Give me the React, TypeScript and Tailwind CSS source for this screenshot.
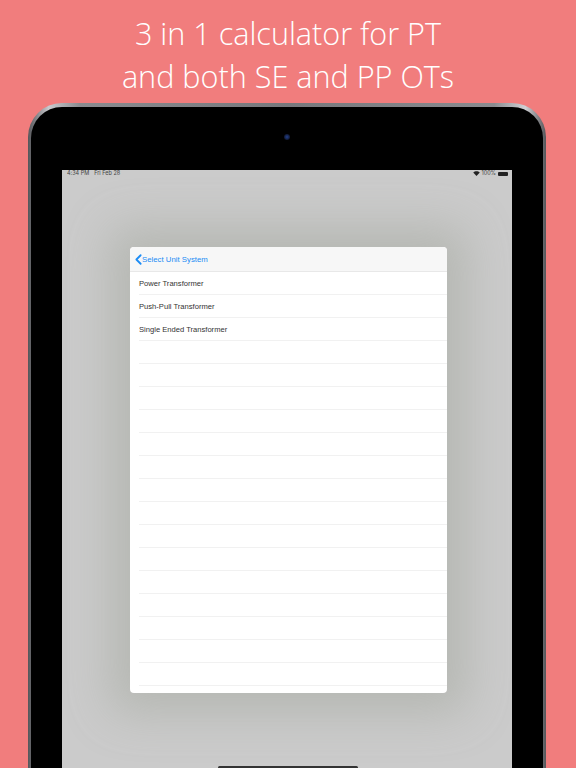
import React from "react";
import { ChevronLeft } from "lucide-react";

const rows = [
  "Power Transformer",
  "Push-Pull Transformer",
  "Single Ended Transformer",
  ...Array(15).fill(""),
];

function StatusBar() {
  return (
    <div className="h-[7px] flex items-center justify-between pl-[5px] pr-[4px] text-[5.5px] leading-[7px] text-[#444] font-['Inter',sans-serif]">
      <div className="flex gap-[5px]">
        <span>4:34 PM</span>
        <span>Fri Feb 28</span>
      </div>
      <div className="flex items-center gap-[2px]">
        <svg width="7" height="5" viewBox="0 0 14 10" fill="#222" className="-mr-[1px]">
          <path d="M7 10 L0.5 3.2 C4 -0.6 10 -0.6 13.5 3.2 Z" />
        </svg>
        <span>100%</span>
        <div className="w-[10px] h-[4px] bg-[#222] rounded-[1px]" />
      </div>
    </div>
  );
}

function UnitCard() {
  return (
    <div className="w-[317px] h-[446px] bg-white rounded-[4px] overflow-hidden shadow-[0_0_45px_20px_rgba(178,180,174,0.85)] font-['Liberation_Sans',sans-serif]">
      <div className="h-[25px] pt-[1px] bg-[#f7f7f7] border-b border-[#e8e8e8] flex items-center text-[#1b8cf5] text-[7.8px]">
        <ChevronLeft size={17} strokeWidth={2.5} className="-mr-[5px]" />
        <span>Select Unit System</span>
      </div>
      <div className="pl-[9px]">
        {rows.map((row, i) => (
          <div
            key={i}
            className="h-[23px] pt-[1px] border-b border-[#f1f1f1] flex items-center text-[7.6px] text-[#333]"
          >
            {row}
          </div>
        ))}
      </div>
    </div>
  );
}

export default function App() {
  return (
    <div className="w-[576px] h-[768px] overflow-hidden bg-[#f17d7d] flex flex-col">
      <div className="pt-[12px] h-[103px] shrink-0 text-center text-white text-[30.6px] leading-[43px] font-light font-['Open_Sans',sans-serif]">
        <div>3 in 1 calculator for PT</div>
        <div>and both SE and PP OTs</div>
      </div>
      <div className="ml-[28px] w-[518px] h-[700px] shrink-0 rounded-t-[34px] pt-[4px] px-[3px] bg-[linear-gradient(90deg,#55565a_0%,#c9c9cd_4%,#8a8b8f_10%,#77787c_50%,#8a8b8f_90%,#d0d0d4_96%,#55565a_100%)]">
        <div className="h-full rounded-t-[31px] bg-black pt-[63px] px-[31px] flex flex-col items-center relative">
          <div className="absolute top-[27px] left-1/2 -translate-x-1/2 w-[6px] h-[6px] rounded-full bg-[radial-gradient(circle,#23408c_0%,#101830_70%)]" />
          <div className="w-[450px] h-[640px] bg-[#cbcbcb] flex flex-col relative overflow-hidden">
            <StatusBar />
            <div className="flex justify-center pl-[3px] mt-[70px]">
              <UnitCard />
            </div>
            <div className="absolute top-[596px] left-[156px] w-[140px] h-[3px] bg-[#333] rounded-full" />
          </div>
        </div>
      </div>
    </div>
  );
}
